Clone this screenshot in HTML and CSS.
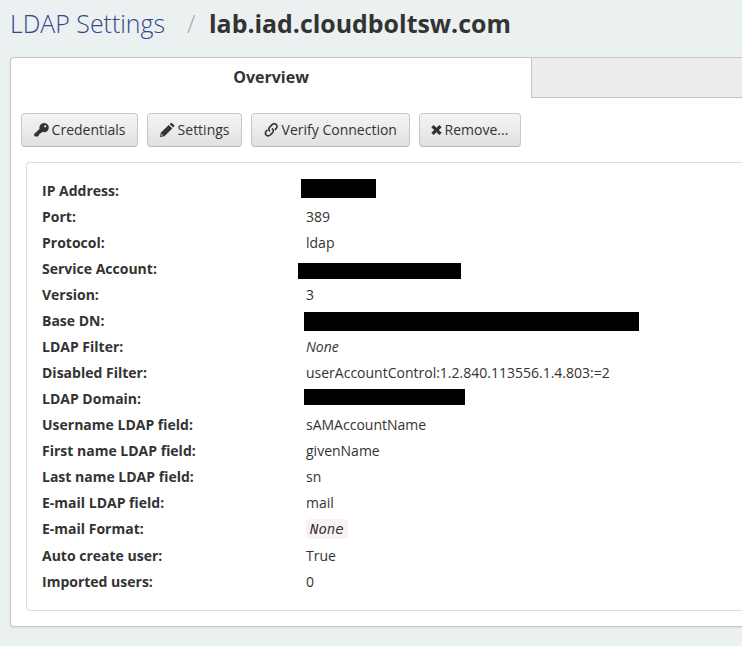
FILE: index.html
```html
<!DOCTYPE html>
<html lang="en">
<head>
<meta charset="utf-8">
<title>LDAP Settings</title>
<link rel="stylesheet" href="styles.css">
</head>
<body>
<h1 class="crumbs"><a class="parent">LDAP Settings</a><span class="sep">/</span><span class="current">lab.iad.cloudboltsw.com</span></h1>
<main class="panel">
  <nav class="tabs"><div class="tab">Overview</div><div class="tab-rest"></div></nav>
  <div class="actions">
    <button class="btn"><svg viewBox="0 0 15 14"><path fill-rule="evenodd" d="M10 0a4.6 4.6 0 1 1-1.7 8.8L7.5 9.9H6.2v1.4H4.8v1.5L3.9 13.6H1L.2 12.9v-2L5.6 5.8A4.6 4.6 0 0 1 10 0zM11.2 2.2a1.1 1.1 0 1 0 0 2.2 1.1 1.1 0 0 0 0-2.2z"/></svg><span>Credentials</span></button>
    <button class="btn"><svg viewBox="0 0 15 14"><path fill-rule="evenodd" d="M8.7 1.9 12.3 5.5 4.4 13.2 0 13.9.8 9.7zM9.6 1l.9-.8q.8-.6 1.5 0L14 2.1q.7.7 0 1.5l-.9.9zM1.5 11.2l-.2 1.5 1.5-.3v-1H2z"/></svg><span>Settings</span></button>
    <button class="btn"><svg class="link" viewBox="0 0 15 14"><path d="M6.1 8.4C4.6 7.2 4.5 5.4 5.7 4.1l2.4-2.5c2.8-2.4 6.5.8 4.1 3.8l-1.4 1.5"/><path d="M7.8 5.3c1.8 1.2 1.9 3 .8 4.3L6.2 12c-2.7 2.4-6.3-.9-4-3.7l1.4-1.5"/></svg><span>Verify Connection</span></button>
    <button class="btn remove"><svg viewBox="0 0 11 14"><path d="M2.6 1.9 5.5 4.7 8.4 1.9l2.3 2.3L7.8 7l2.9 2.8-2.3 2.3L5.5 9.3l-2.9 2.8L.3 9.8 3.2 7 .3 4.2z"/></svg><span>Remove...</span></button>
  </div>
  <dl class="details">
    <dt>IP Address:</dt><dd><span class="redacted ip"></span></dd>
    <dt>Port:</dt><dd>389</dd>
    <dt>Protocol:</dt><dd>ldap</dd>
    <dt>Service Account:</dt><dd><span class="redacted account"></span></dd>
    <dt>Version:</dt><dd>3</dd>
    <dt>Base DN:</dt><dd><span class="redacted base"></span></dd>
    <dt>LDAP Filter:</dt><dd><em>None</em></dd>
    <dt>Disabled Filter:</dt><dd>userAccountControl:1.2.840.113556.1.4.803:=2</dd>
    <dt>LDAP Domain:</dt><dd><span class="redacted domain"></span></dd>
    <dt>Username LDAP field:</dt><dd>sAMAccountName</dd>
    <dt>First name LDAP field:</dt><dd>givenName</dd>
    <dt>Last name LDAP field:</dt><dd>sn</dd>
    <dt>E-mail LDAP field:</dt><dd>mail</dd>
    <dt>E-mail Format:</dt><dd><code>None</code></dd>
    <dt>Auto create user:</dt><dd>True</dd>
    <dt>Imported users:</dt><dd>0</dd>
  </dl>
</main>
</body>
</html>
```
FILE: styles.css
```css
* { box-sizing: border-box; }
body {
  margin: 0;
  height: 646px;
  overflow: hidden;
  background: #ebf0f1;
  color: #333;
  font: 14px/20px "Open Sans", sans-serif;
}
.crumbs {
  display: flex;
  height: 57px;
  margin: 0;
  padding: 5px 0 0 10px;
  font-size: 24.9px;
  line-height: 36px;
  white-space: nowrap;
}
.parent { width: 177px; color: #34498a; font-weight: 300; }
.sep { width: 22px; color: #aaa; font-weight: 300; }
.current { font-weight: 700; }
.panel {
  height: 570px;
  margin-left: 10px;
  background: #fff;
  border: 1px solid #c5c7c9;
  border-right: 0;
  border-radius: 4px 0 0 4px;
  box-shadow: 0 1px 2px rgba(0, 0, 0, .08);
}
.tabs { display: flex; height: 40px; }
.tab {
  width: 520px;
  font-size: 16px;
  font-weight: 700;
  line-height: 38px;
  text-align: center;
}
.tab-rest {
  flex: 1;
  background: #ededed;
  border: solid #c3c3c3;
  border-width: 0 0 1px 1px;
}
.actions { display: flex; gap: 9px; padding: 15px 0 0 10px; }
.btn {
  display: flex;
  align-items: center;
  width: 117px;
  height: 34px;
  margin: 0;
  padding: 0 0 1px 12px;
  color: #333;
  font: inherit;
  white-space: nowrap;
  background: linear-gradient(#f5f5f5, #e0e0e0);
  border: 1px solid #c8c8c8;
  border-bottom-color: #b8b8b8;
  border-radius: 4px;
}
.btn:nth-child(2) { width: 95px; }
.btn:nth-child(3) { width: 159px; }
.btn:nth-child(4) { width: 102px; }
.btn svg { width: 15px; height: 14px; margin-right: 2.6px; fill: #333; }
.btn .link { fill: none; stroke: #333; stroke-width: 1.6; }
.btn.remove svg { width: 11px; }
.btn.remove { padding-left: 11px; }
.details {
  display: grid;
  grid-template-columns: 264px 1fr;
  grid-template-rows: repeat(13, 26px) 27px 26px 26px;
  height: 449px;
  margin: 15px 0 0 15px;
  padding: 15px 0 15px 15px;
  line-height: 26px;
  border: 1px solid #ddd;
  border-right: 0;
  border-radius: 4px 0 0 4px;
}
dt { font-weight: 700; }
dd { margin: 0; }
.redacted { display: block; background: #000; }
.ip { width: 75px; height: 19px; margin: 1px 0 0 -4.6px; }
.account { width: 163px; height: 16px; margin: 7px 0 0 -7.6px; }
.base { width: 335px; height: 19px; margin: 4px 0 0 -1.6px; }
.domain { width: 161px; height: 16px; margin: 3px 0 0 -1.6px; }
code {
  padding: 2px 4px;
  font: italic 14px "DejaVu Sans Mono", monospace;
  background: #f9f2f4;
  border-radius: 4px;
}
```
